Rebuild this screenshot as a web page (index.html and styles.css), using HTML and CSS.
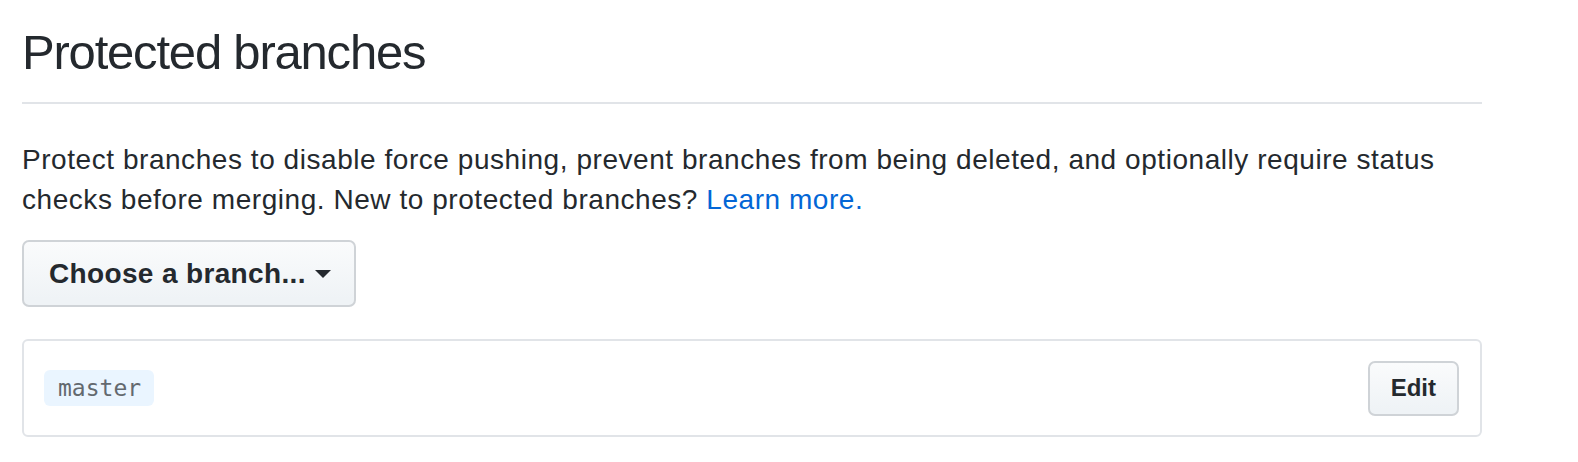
FILE: index.html
```html
<!DOCTYPE html>
<html lang="en">
<head>
<meta charset="utf-8">
<title>Protected branches</title>
<link rel="stylesheet" href="styles.css">
</head>
<body>
<main class="page">
  <h2 class="title">Protected branches</h2>
  <p class="lead">Protect branches to disable force pushing, prevent branches from being deleted, and optionally require status checks before merging. New to protected branches? <a class="link" href="#">Learn more.</a></p>
  <button class="btn btn-select" type="button">Choose a branch... <span class="caret"></span></button>
  <div class="box">
    <div class="box-row">
      <code class="branch">master</code>
      <button class="btn btn-sm" type="button">Edit</button>
    </div>
  </div>
</main>
</body>
</html>
```

FILE: styles.css
```css
html, body {
  margin: 0;
  padding: 0;
  background: #fff;
}
body {
  font-family: "Liberation Sans", Arial, sans-serif;
  color: #24292e;
}
.page {
  width: 1460px;
  padding: 0 0 0 22px;
  display: flex;
  flex-direction: column;
  align-items: flex-start;
}
.title {
  align-self: stretch;
  margin: 22px 0 0;
  font-size: 49px;
  font-weight: 400;
  letter-spacing: -1.2px;
  line-height: 60px;
  padding-bottom: 20px;
  border-bottom: 2px solid #e1e4e8;
}
.lead {
  margin: 36px 0 0;
  font-size: 28px;
  line-height: 40px;
  letter-spacing: 0.55px;
}
.link {
  color: #0366d6;
  text-decoration: none;
}
.btn {
  font-family: "Liberation Sans", Arial, sans-serif;
  font-weight: 700;
  color: #24292e;
  background: linear-gradient(#fafbfc, #eff3f6 90%);
  border: 2px solid #cfd3d7;
  border-radius: 7px;
  display: inline-flex;
  align-items: center;
  cursor: pointer;
}
.btn-select {
  margin-top: 20px;
  height: 67px;
  padding: 0 23px 0 25px;
  font-size: 28px;
  letter-spacing: 0.35px;
  gap: 9px;
}
.caret {
  width: 0;
  height: 0;
  border-left: 8px solid transparent;
  border-right: 8px solid transparent;
  border-top: 8px solid #24292e;
}
.box {
  align-self: stretch;
  margin-top: 32px;
  border: 2px solid #e1e4e8;
  border-radius: 6px;
}
.box-row {
  height: 94px;
  padding: 0 21px 0 20px;
  display: flex;
  align-items: center;
  justify-content: space-between;
}
.branch {
  font-family: "DejaVu Sans Mono", "Liberation Mono", monospace;
  font-size: 23px;
  line-height: 36px;
  padding: 0 13px 0 14px;
  color: #63696f;
  background: #eaf5ff;
  border-radius: 6px;
}
.btn-sm {
  height: 55px;
  padding: 0 21px;
  font-size: 24px;
}
```
